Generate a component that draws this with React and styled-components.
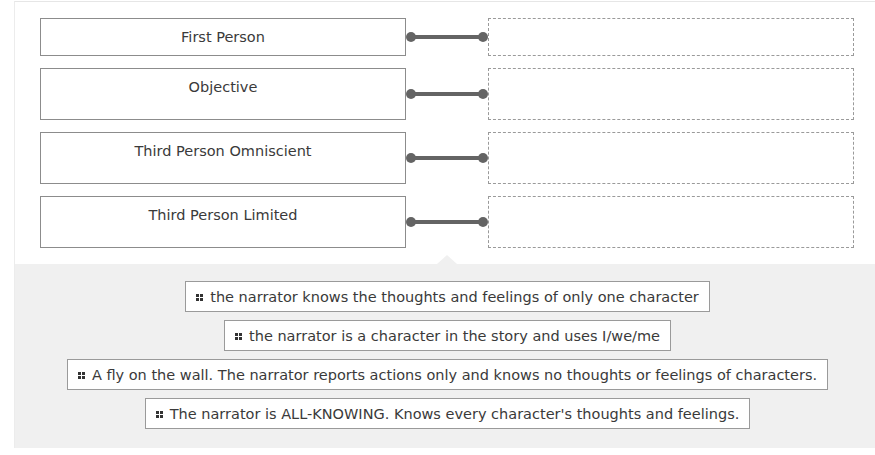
import React from "react";
import styled, { createGlobalStyle } from "styled-components";

const GlobalStyle = createGlobalStyle`
  html, body {
    margin: 0;
    padding: 0;
    background: #fff;
    overflow-x: hidden;
  }
  body {
    font-family: "DejaVu Sans", Verdana, sans-serif;
    color: #333;
  }
`;

const Container = styled.div`
  margin: 1px 0 0 14px;
  width: 866px;
  border-top: 1px solid #e6e6e6;
  border-left: 1px solid #ececec;
  box-sizing: border-box;
`;

const MatchArea = styled.div`
  display: flex;
  flex-direction: column;
  gap: 12px;
  padding: 16px 25px 16px 25px;
`;

const Row = styled.div`
  display: flex;
  align-items: stretch;
  height: ${(p) => p.h}px;
`;

const Prompt = styled.div`
  width: 366px;
  box-sizing: border-box;
  border: 1px solid #8c8c8c;
  background: #fff;
  text-align: center;
  font-size: 14.5px;
  line-height: 18px;
  padding-top: 9px;
  color: #3a3a3a;
`;

const Connector = styled.div`
  width: 82px;
  display: flex;
  align-items: center;
`;

const Dot = styled.span`
  width: 10px;
  height: 10px;
  border-radius: 50%;
  background: #646464;
  flex: none;
`;

const Line = styled.span`
  flex: 1;
  height: 4px;
  background: #646464;
  margin: 0 -1px;
`;

const DropZone = styled.div`
  width: 366px;
  box-sizing: border-box;
  border: 1px dashed #9a9a9a;
  background: #fff;
`;

const Pool = styled.div`
  position: relative;
  background: #f0f0f0;
  display: flex;
  flex-direction: column;
  align-items: center;
  gap: 8px;
  padding: 17px 0 19px;

  &::before {
    content: "";
    position: absolute;
    top: -9px;
    left: 422px;
    border-left: 10px solid transparent;
    border-right: 10px solid transparent;
    border-bottom: 9px solid #f0f0f0;
  }
`;

const Option = styled.div`
  display: flex;
  align-items: center;
  gap: 7px;
  height: 31px;
  box-sizing: border-box;
  padding: 0 10px 0 10px;
  border: 1px solid #9a9a9a;
  background: #fff;
  font-size: 14.5px;
  color: #3a3a3a;
  white-space: nowrap;
`;

const Handle = styled.span`
  display: grid;
  grid-template-columns: 3px 3px;
  grid-template-rows: 3px 3px;
  gap: 1px;
  margin-top: 1px;
  span {
    background: #333;
  }
`;

const rows = [
  { label: "First Person", h: 38 },
  { label: "Objective", h: 52 },
  { label: "Third Person Omniscient", h: 52 },
  { label: "Third Person Limited", h: 52 },
];

const options = [
  "the narrator knows the thoughts and feelings of only one character",
  "the narrator is a character in the story and uses I/we/me",
  "A fly on the wall. The narrator reports actions only and knows no thoughts or feelings of characters.",
  "The narrator is ALL-KNOWING. Knows every character's thoughts and feelings.",
];

export default function App() {
  return (
    <>
      <GlobalStyle />
      <Container>
        <MatchArea>
          {rows.map((r) => (
            <Row key={r.label} h={r.h}>
              <Prompt>{r.label}</Prompt>
              <Connector>
                <Dot />
                <Line />
                <Dot />
              </Connector>
              <DropZone />
            </Row>
          ))}
        </MatchArea>
        <Pool>
          {options.map((o) => (
            <Option key={o}>
              <Handle>
                <span />
                <span />
                <span />
                <span />
              </Handle>
              {o}
            </Option>
          ))}
        </Pool>
      </Container>
    </>
  );
}
